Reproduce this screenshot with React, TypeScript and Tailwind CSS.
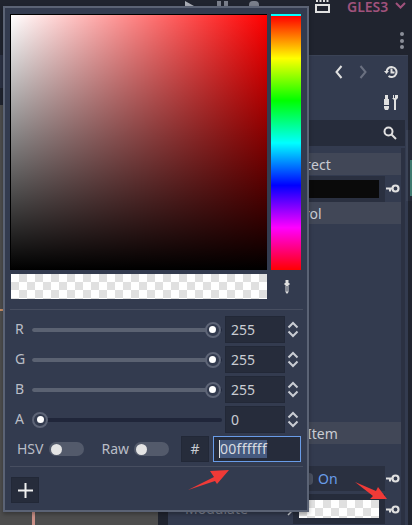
import React from 'react';

const Key = () => (
  <svg width="14" height="9" viewBox="0 0 14 9" className="block">
    <circle cx="9.500" cy="4.500" r="3" fill="none" stroke="#e0e0e0" strokeWidth="2.200" />
    <path d="M0 3.500h7v2H5v2H3v-2H0z" fill="#e0e0e0" />
  </svg>
);

const Spin = () => (
  <svg width="12" height="17" viewBox="0 0 12 17" fill="none" stroke="#c9ccd3" strokeWidth="2" className="block">
    <path d="M1.500 6.500L6 2L10.500 6.500M1.500 10.500L6 15L10.500 10.500" />
  </svg>
);

const Channel = ({ label, value, pct }: { label: string; value: string; pct: number }) => (
  <div className="flex items-center h-[27px] mb-[3px]">
    <span className="w-[21px] pl-[4px] text-[#b9bdc6] -mt-[1px]">{label}</span>
    <div className="relative w-[190px] h-[4px] bg-[#20263a] rounded-sm">
      <div className="h-full bg-[#5b6272] rounded-sm" style={{ width: `${pct}%` }} />
      <div
        className="absolute top-[-6px] w-[16px] h-[16px] rounded-full border-2 border-[#5e6577] flex items-center justify-center bg-[#333b4f]"
        style={{ left: `${pct}%`, marginLeft: pct ? -8 : 0 }}
      >
        <div className="w-[7px] h-[7px] rounded-full bg-white" />
      </div>
    </div>
    <div className="ml-[3px] w-[60px] h-[27px] bg-[#262c3b] border border-[#222837] pl-[5px] flex items-center text-[#c9ccd3]">
      {value}
    </div>
    <div className="ml-[2px]">
      <Spin />
    </div>
  </div>
);

const Toggle = () => (
  <div className="w-[35px] h-[14px] rounded-full bg-[#535a6b] flex items-center pl-[2px]">
    <div className="w-[11px] h-[11px] rounded-full bg-[#e4e4e4]" />
  </div>
);

const checker = 'bg-[repeating-conic-gradient(#e0e0e0_0_25%,#ffffff_0_50%)] bg-size-[16px_16px]';

export default function App() {
  return (
    <div className="relative w-[412px] h-[525px] overflow-hidden bg-[#20242f] font-['Noto_Sans',sans-serif] text-[14px] leading-none">
      {/* top bar, mostly hidden by the popup */}
      <div className="h-[55px] relative flex items-start">
        <svg width="9" height="6" viewBox="0 0 9 6" className="ml-[185px] mt-px">
          <path d="M0 0l9 5v1H0z" fill="#a9adb6" />
        </svg>
        <div className="ml-[23px] mt-px flex gap-[3px]">
          <div className="w-[4px] h-[5px] bg-[#7a7f8b]" />
          <div className="w-[4px] h-[5px] bg-[#7a7f8b]" />
        </div>
        <div className="ml-[21px] mt-px w-[10px] h-[5px] bg-[#7a7f8b] rounded-t-sm" />
        <svg width="15" height="13" viewBox="0 0 15 13" className="ml-[56px]">
          <path d="M1 0h2v2H1zM4.500 0h2v2h-2zM8 0h2v2H8zM11.500 0h2v2h-2z" fill="#e0e0e0" />
          <path d="M0 4h15v9H0zM2 6v5h11V6z" fill="#e0e0e0" fillRule="evenodd" />
        </svg>
        <span className="ml-[17px] text-[#a0527c] font-semibold text-[14px]">GLES3</span>
        <svg width="11" height="7" viewBox="0 0 11 7" fill="none" stroke="#a0527c" strokeWidth="2" className="ml-[7px] mt-[2px]">
          <path d="M1 1l4.500 4.500L10 1" />
        </svg>
        <div className="absolute right-[8px] top-[32px] flex flex-col gap-[2.500px]">
          <div className="w-[4px] h-[4px] rounded-full bg-[#8b8f99]" />
          <div className="w-[4px] h-[4px] rounded-full bg-[#8b8f99]" />
          <div className="w-[4px] h-[4px] rounded-full bg-[#8b8f99]" />
        </div>
      </div>
      <div className="flex h-[470px]">
        {/* viewport column */}
        <div className="w-[158px] flex flex-col">
          <div className="h-[33px] bg-[#2c3244]" />
          <div className="h-[17px]" />
          <div className="flex-1 bg-[#4d4d4d] flex flex-col">
            <div className="mt-[204px] h-[2px] w-[10px] bg-[#c98f66]" />
            <div className="flex-1" />
            <div className="ml-[32px] w-[3px] h-[14px] bg-[#c98f86]" />
          </div>
        </div>
        <div className="w-[10px]" />
        {/* inspector */}
        <div className="w-[240px] bg-[#333b4f] border-t border-[#3b4356] flex flex-col items-stretch">
          <div className="flex flex-col items-end pr-[10px] pt-[9px]">
            <div className="flex items-center">
              <svg width="8" height="14" viewBox="0 0 8 14" fill="none" stroke="#e0e0e0" strokeWidth="2">
                <path d="M6.500 1L1.500 7l5 6" />
              </svg>
              <svg width="8" height="14" viewBox="0 0 8 14" fill="none" stroke="#6a7080" strokeWidth="2" className="ml-[16px]">
                <path d="M1.500 1l5 6-5 6" />
              </svg>
              <svg width="14" height="14" viewBox="0 0 14 14" fill="none" stroke="#e0e0e0" strokeWidth="2" className="ml-[17px]">
                <path d="M2.500 7a5 5 0 1 1 2 4M7.500 3.500V7.500H10.500" />
                <path d="M0 6l2.500 3L5 6z" fill="#e0e0e0" stroke="none" />
              </svg>
            </div>
            <svg width="14" height="15" viewBox="0 0 14 15" className="mt-[16px]">
              <path d="M1 0h3v4h1v6H0V4h1zM0 11h5v2l-1 2H1l-1-2z" fill="#e0e0e0" />
              <path d="M8 0v3h1V0h1v3h1V0h3v3l-2 2v10h-2V5L8 3V0z" fill="#e0e0e0" />
            </svg>
          </div>
          <div className="mt-[10px] mr-[3px] h-[26px] bg-[#262c3b] flex items-center justify-end pr-[8px]">
            <svg width="14" height="14" viewBox="0 0 14 14" fill="none" stroke="#e0e0e0" strokeWidth="2">
              <circle cx="5.500" cy="5.500" r="4" />
              <path d="M8.500 8.500L13 13" />
            </svg>
          </div>
          <div className="flex-1 mt-[2px] mr-[3px] pr-[4px] bg-[#2b3142]">
            <div className="h-full bg-[#333b4f] pt-[5px]">
              <div className="h-[22px] pt-px bg-[#414757] flex items-center pl-[138px] text-[#c9ccd3]">tect</div>
              <div className="flex items-center h-[27px]">
                <div className="w-[217px] h-[26px] bg-[#2a3040] flex items-center pl-[8px]">
                  <div className="w-full mr-[6px] h-[18px] bg-[#0a0a0a]" />
                </div>
                <div className="ml-px">
                  <Key />
                </div>
              </div>
              <div className="h-[22px] pt-px bg-[#414757] flex items-center pl-[136px] text-[#c9ccd3]">rol</div>
              <div className="h-[198px]" />
              <div className="h-[22px] pt-px bg-[#414757] flex items-center pl-[139px] text-[#c9ccd3]">Item</div>
              <div className="h-[22px]" />
              <div className="flex items-center h-[25px]">
                <div className="w-[217px] h-[25px] bg-[#2a3040] flex items-center pl-[133px] text-[#699ce8]">
                  <div className="w-[12px] h-[12px] mr-[5px] rounded-sm bg-[#4a5060]" />
                  On
                </div>
                <div className="ml-px">
                  <Key />
                </div>
              </div>
              <div className="h-[3px]" />
              <div className="flex items-center h-[30px]">
                <div className="w-[217px] h-[30px] flex items-center pl-[17px] text-[#7d8290]">
                  Modulate
                  <svg width="5" height="8" viewBox="0 0 5 8" fill="none" stroke="#c9ccd3" strokeWidth="1.500" className="ml-[39px] mt-[6px]">
                    <path d="M1 1l3 3-3 3" />
                  </svg>
                  <div className="ml-auto w-[92px] h-[30px] bg-[#262c3b] flex items-center pl-[6px]">
                    <div className={`w-[80px] h-[18px] ${checker}`} />
                  </div>
                </div>
                <div className="ml-px">
                  <Key />
                </div>
              </div>
            </div>
          </div>
        </div>
        <div className="flex-1 relative">
          <div className="ml-[-2px] mt-[75px] h-[71px] border-l-2 border-[#3b4356] bg-[#252a38] pl-[2px] pt-[30px]">
            <div className="h-[36px] bg-[#3f7a70]" />
          </div>
        </div>
      </div>

      {/* color picker popup */}
      <div className="absolute left-[3px] top-[6px] w-[306px] h-[506px] bg-[#333b4f] border-2 border-[#5b6375] shadow-[0_2px_4px_rgba(0,0,0,0.3)] pl-[6px] pt-[6px] pr-[5px]">
        <div className="flex gap-[4px]">
          <div className="-ml-px w-[257px] h-[256px] border-l border-t border-black bg-[linear-gradient(to_top,#000,transparent),linear-gradient(to_right,#fff,#f00)]" />
          <div className="w-[30px] h-[256px] border-t-2 border-[#00ffff] bg-[linear-gradient(to_bottom,#f00,#ff0,#0f0,#0ff,#00f,#f0f,#f00)]" />
        </div>
        <div className="flex mt-[4px] items-center">
          <div className={`w-[256px] h-[25px] ${checker}`} />
          <svg width="8" height="16" viewBox="0 0 8 16" className="ml-[16px]">
            <path d="M2.500 1h3v3h1v2h-1v7l-1.500 2l-1.500-2V6h-1V4h1zM3.500 7v5.500h1V7z" fill="#e0e0e0" fillRule="evenodd" />
          </svg>
        </div>
        <div className="h-px bg-[#474e60] mt-[10px] mb-[6px] -mx-[1px]" />
        <Channel label="R" value="255" pct={95} />
        <Channel label="G" value="255" pct={95} />
        <Channel label="B" value="255" pct={95} />
        <Channel label="A" value="0" pct={0} />
        <div className="flex items-center h-[26px]">
          <span className="pl-[6px] text-[#b9bdc6]">HSV</span>
          <div className="ml-[6px]">
            <Toggle />
          </div>
          <span className="ml-[17px] text-[#b9bdc6]">Raw</span>
          <div className="ml-[5px]">
            <Toggle />
          </div>
          <div className="ml-[12px] w-[28px] h-[26px] bg-[#262c3b] border border-[#222837] flex items-center justify-center text-[#c9ccd3]">
            #
          </div>
          <div className="ml-[4px] w-[88px] h-[26px] bg-[#262c3b] border border-[#699ce8] flex items-center pl-[5px] text-[#d8dae0]">
            <span className="bg-[#465a7f] border-l border-[#e0e0e0] py-[2px] tracking-[0.25px]">00ffffff</span>
          </div>
        </div>
        <div className="h-px bg-[#474e60] mt-[4px] mb-[10px] -mx-[1px]" />
        <div className="w-[28px] h-[26px] bg-[#262c3b] border border-[#222837] flex items-center justify-center">
          <svg width="15" height="15" viewBox="0 0 15 15">
            <path d="M6.500 0h2v6.500H15v2H8.500V15h-2V8.500H0v-2h6.500z" fill="#f0f0f0" />
          </svg>
        </div>
      </div>

      {/* red annotation arrows */}
      <svg className="absolute left-0 top-0 pointer-events-none" width="412" height="525" viewBox="0 0 412 525">
        <path d="M188 490L214 477L210 471L229 470L217 484L215 481Z" fill="#f03a37" />
        <path d="M355 482L376 491L378 487L387 499L370 499L373 496Z" fill="#f03a37" />
      </svg>
    </div>
  );
}
